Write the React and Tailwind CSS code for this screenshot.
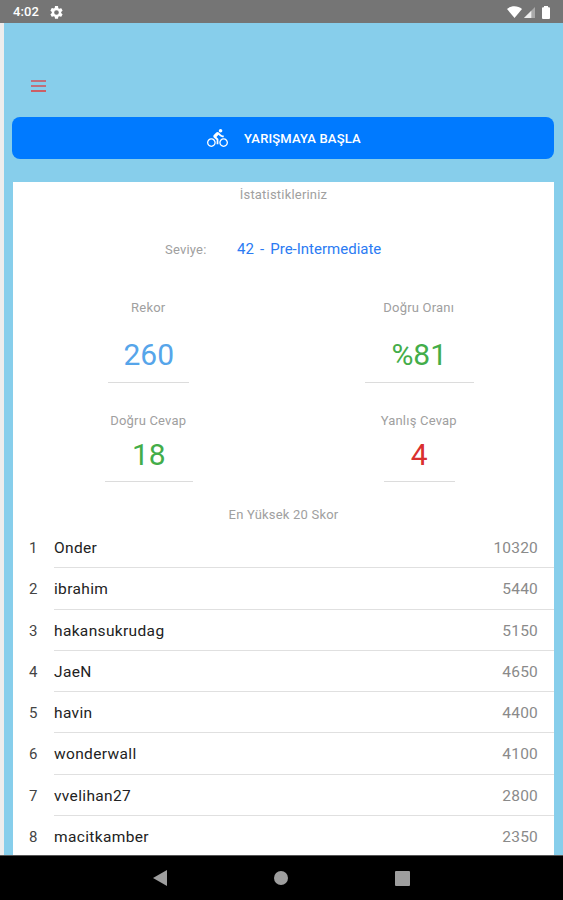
const scores = [
  { name: 'Onder', score: 10320 },
  { name: 'ibrahim', score: 5440 },
  { name: 'hakansukrudag', score: 5150 },
  { name: 'JaeN', score: 4650 },
  { name: 'havin', score: 4400 },
  { name: 'wonderwall', score: 4100 },
  { name: 'vvelihan27', score: 2800 },
  { name: 'macitkamber', score: 2350 }
];

function StatusBar() {
  return (
    <div className="flex h-[23px] shrink-0 items-center bg-[#757575] pt-px pl-[13px] pr-[13px] text-white">
      <span className="w-[37px] text-[13px] leading-[22px] font-medium tracking-[0.1px]">4:02</span>
      <svg className="h-[13px] w-[13px]" viewBox="2 2 20 20" fill="currentColor">
        <path d="M19.14 12.94c.04-.3.06-.61.06-.94s-.02-.64-.07-.94l2.03-1.58a.49.49 0 0 0 .12-.61l-1.92-3.32a.49.49 0 0 0-.59-.22l-2.39.96c-.5-.38-1.03-.7-1.62-.94l-.36-2.54A.48.48 0 0 0 13.92 2h-3.84c-.24 0-.43.17-.47.41l-.36 2.54c-.59.24-1.13.57-1.62.94l-2.39-.96a.48.48 0 0 0-.59.22L2.74 8.87c-.12.21-.08.47.12.61l2.03 1.58c-.05.3-.09.63-.09.94s.02.64.07.94l-2.03 1.58a.49.49 0 0 0-.12.61l1.92 3.32c.12.22.37.29.59.22l2.39-.96c.5.38 1.03.7 1.62.94l.36 2.54c.05.24.24.41.48.41h3.84c.24 0 .44-.17.47-.41l.36-2.54c.59-.24 1.13-.56 1.62-.94l2.39.96c.22.08.47 0 .59-.22l1.92-3.32a.48.48 0 0 0-.12-.61l-2.01-1.58zM12 15.6A3.6 3.6 0 1 1 12 8.4a3.6 3.6 0 0 1 0 7.2z" />
      </svg>
      <div className="ml-auto flex items-center">
        <svg className="h-[12px] w-[15px]" viewBox="0 0 16 12" preserveAspectRatio="none" fill="currentColor">
          <path d="M0 3C4.500-.6 11.500-.6 16 3L8 12z" />
        </svg>
        <svg className="ml-[2px] h-[11px] w-[11px]" viewBox="0 0 12 12">
          <path d="M0 12L12 0v12z" fill="#a9a9a9" />
          <path d="M0 12L8 4v8z" fill="#eee" />
        </svg>
        <svg className="ml-[7px] h-[13px] w-[8px]" viewBox="0 0 8 13" fill="currentColor">
          <path d="M2 1.300V0h4v1.300h1q1 0 1 1V12q0 1-1 1H1q-1 0-1-1V2.300q0-1 1-1z" />
        </svg>
      </div>
    </div>
  );
}

function BikeIcon() {
  return (
    <svg className="h-[18px] w-[21px]" viewBox="0 1.5 24 20.5" fill="currentColor">
      <path d="M15.5 5.5c1.1 0 2-.9 2-2s-.9-2-2-2-2 .9-2 2 .9 2 2 2zM5 12c-2.8 0-5 2.2-5 5s2.2 5 5 5 5-2.2 5-5-2.2-5-5-5zm0 8.500c-1.900 0-3.500-1.600-3.500-3.500s1.600-3.500 3.500-3.500 3.500 1.600 3.500 3.500-1.600 3.500-3.500 3.500zm5.800-10l2.400-2.400.8.8c1.300 1.300 3 2.100 5.100 2.100V9c-1.500 0-2.700-.6-3.600-1.500l-1.900-1.900c-.5-.4-1-.6-1.600-.6s-1.100.2-1.400.6L7.800 8.400c-.4.4-.6.9-.6 1.400 0 .6.2 1.100.6 1.400L11 14v5h2v-6.200l-2.200-2.300zM19 12c-2.800 0-5 2.200-5 5s2.200 5 5 5 5-2.200 5-5-2.200-5-5-5zm0 8.500c-1.900 0-3.500-1.600-3.500-3.500s1.600-3.500 3.500-3.500 3.500 1.600 3.500 3.500-1.600 3.500-3.500 3.500z" />
    </svg>
  );
}

function Stat({ label, value, labelClass, valueClass }) {
  return (
    <div className="flex flex-col items-center">
      <div className={`text-[13px] tracking-[0.2px] text-[#a0a0a0] ${labelClass}`}>{label}</div>
      <div className={`ml-px border-b border-[#dcdcdc] text-center text-[30px] ${valueClass}`}>{value}</div>
    </div>
  );
}

export default function App() {
  return (
    <div className="flex h-[900px] w-[563px] flex-col overflow-hidden bg-black font-[Roboto,sans-serif]">
      <StatusBar />

      <div className="flex h-[832px] shrink-0 flex-col border-l-4 border-[#ededed] bg-[#87ceeb] pr-[9px] pl-[9px]">
        <div className="flex h-[94px] shrink-0 items-start pt-[57px] pl-[18px]">
          <button className="flex w-[15px] flex-col gap-[3px]" aria-label="Menu">
            <span className="h-[2px] w-full bg-[#bf6f7b]" />
            <span className="h-[2px] w-full bg-[#bf6f7b]" />
            <span className="h-[2px] w-full bg-[#cc5f66]" />
          </button>
        </div>

        <button className="-ml-px flex h-[42px] w-[542px] shrink-0 items-center rounded-[8px] bg-[#007aff] pl-[195px] text-white">
          <BikeIcon />
          <span className="ml-[16px] pt-[2px] text-[13px] font-medium tracking-[0.15px]">YARIŞMAYA BAŞLA</span>
        </button>

        <div className="mt-[23px] h-[673px] w-[541px] shrink-0 overflow-hidden bg-white">
          <div className="h-[24px] text-center text-[13px] leading-[25px] tracking-[0.2px] text-[#a0a0a0]">
            İstatistikleriniz
          </div>

          <div className="flex h-[86px] items-center pl-[152px]">
            <span className="w-[72px] pt-px text-[13px] tracking-[0.2px] text-[#a0a0a0]">Seviye:</span>
            <span className="text-[15px] [word-spacing:2.4px] text-[#2b7bf3]">42 - Pre-Intermediate</span>
          </div>

          <div className="grid grid-cols-2">
            <Stat
              label="Rekor"
              value="260"
              labelClass="h-[41px] leading-[31px]"
              valueClass="h-[50px] w-[81px] leading-[44px] text-[#56a5ea]"
            />
            <Stat
              label="Doğru Oranı"
              value="%81"
              labelClass="h-[41px] leading-[31px]"
              valueClass="h-[50px] w-[109px] leading-[44px] text-[#43ad49]"
            />
            <Stat
              label="Doğru Cevap"
              value="18"
              labelClass="h-[49px] pt-[23px] leading-[30px]"
              valueClass="h-[50px] w-[88px] leading-[45px] text-[#43ad49]"
            />
            <Stat
              label="Yanlış Cevap"
              value="4"
              labelClass="h-[49px] pt-[23px] leading-[30px]"
              valueClass="h-[50px] w-[71px] leading-[45px] text-[#d9302f]"
            />
          </div>

          <div className="h-[45px] pt-[21px] text-center text-[13px] leading-[24px] tracking-[0.2px] text-[#a0a0a0]">
            En Yüksek 20 Skor
          </div>

          <div>
            {scores.map((row, i) => (
              <div key={row.name} className="flex h-[41.25px] text-[15.5px] leading-[43px]">
                <span className="w-[41px] pl-[16px] text-[15px] text-[#444]">{i + 1}</span>
                <div className="flex flex-1 justify-between border-b border-[#e0e0e0] pr-[16px]">
                  <span className="tracking-[0.35px] text-[#222]">{row.name}</span>
                  <span className="tracking-[0.2px] text-[#8a8a8a]">{row.score}</span>
                </div>
              </div>
            ))}
          </div>
        </div>
      </div>

      <div className="flex h-[45px] items-center justify-center border-t border-[#555] text-[#9e9e9e]">
        <svg className="h-[16px] w-[14px]" viewBox="0 0 14 16" fill="currentColor">
          <path d="M14 0v16L0 8z" />
        </svg>
        <span className="mx-[107px] h-[14px] w-[14px] rounded-full bg-[#9e9e9e]" />
        <span className="h-[15px] w-[15px] rounded-[1px] bg-[#9e9e9e]" />
      </div>
    </div>
  );
}
